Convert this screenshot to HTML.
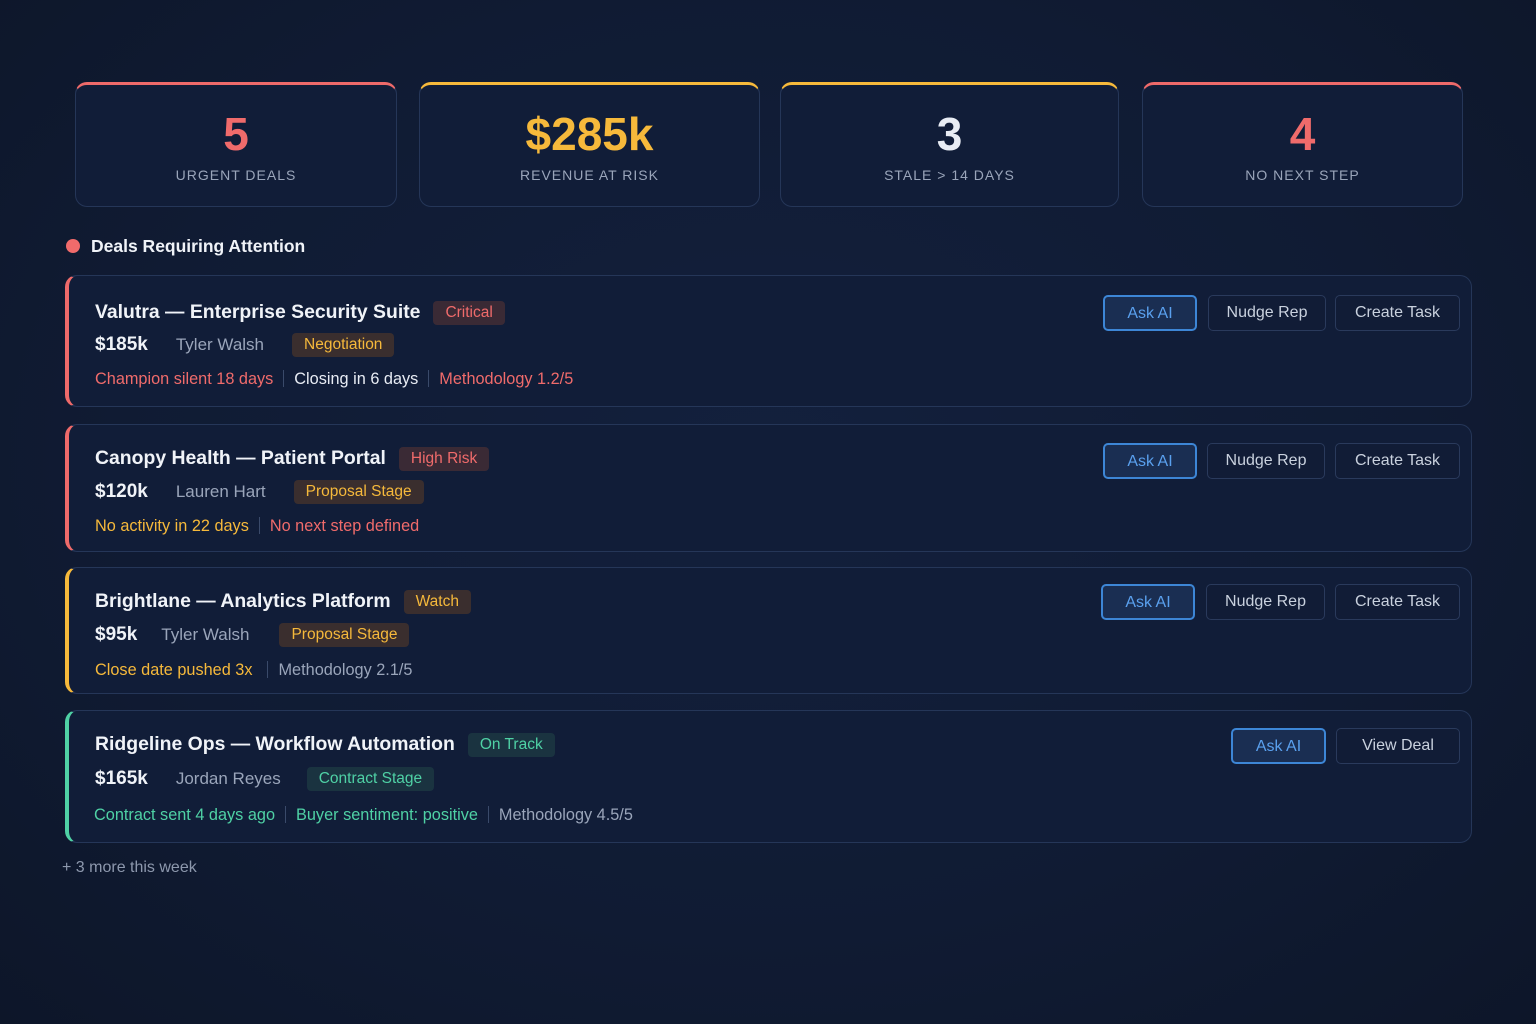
<!DOCTYPE html>
<html><head><meta charset="utf-8"><style>
*{box-sizing:border-box;margin:0;padding:0}
body{width:1536px;height:1024px;overflow:hidden;background:radial-gradient(ellipse at 50% 45%,#13203d 0%,#101b33 60%,#0d1629 100%);font-family:"Liberation Sans",sans-serif;color:#e8ecf4;position:relative}
.stat{position:absolute;top:82px;height:125px;border:1.5px solid #253658;border-radius:12px;background:#111d38;text-align:center}
.stat .n{position:absolute;left:0;right:0;top:23px;font-size:46px;font-weight:bold;line-height:52px}
.stat .l{position:absolute;left:0;right:0;top:82px;font-size:14px;letter-spacing:1px;color:#9aa5ba}
.red{color:#f06b6b}.amb{color:#f6b93b}.grn{color:#4fd1a5}.gry{color:#9aa5ba}.wht{color:#e8ecf4}
.card{position:absolute;left:65px;width:1407px;border:1.5px solid #253658;border-radius:12px;background:#111d38}
.card .t{position:absolute;left:26px;font-size:19.4px;font-weight:bold;color:#f0f3f8;white-space:nowrap}
.tag{display:inline-block;font-size:15.5px;font-weight:normal;padding:3px 12px;border-radius:4px;margin-left:13px;vertical-align:1px}
.r2{position:absolute;left:26px;font-size:17px;white-space:nowrap}
.r2 b{font-size:19px;color:#f0f3f8;margin-right:28px}
.r2 .p{color:#9aa5ba;margin-right:26px}
.r3{position:absolute;left:26px;font-size:16.3px;white-space:nowrap}
.sep{display:inline-block;width:1px;height:17px;background:#3a4a6a;margin:0 10px;vertical-align:-3px}
.btn{position:absolute;height:36px;border:1.5px solid #2a3a5c;border-radius:5px;font-size:16px;color:#c9d1de;text-align:center;line-height:33px;background:#111c36}
.btn.ai{border:2px solid #3d86d6;background:#1a2e52;color:#5aa0ee}
</style></head><body>
<div class="stat" style="left:75px;width:322px;border-top:3px solid #ee6a6a"><div class="n red">5</div><div class="l">URGENT DEALS</div></div>
<div class="stat" style="left:419px;width:341px;border-top:3px solid #f6b93b"><div class="n amb">$285k</div><div class="l">REVENUE AT RISK</div></div>
<div class="stat" style="left:780px;width:339px;border-top:3px solid #f6b93b"><div class="n wht">3</div><div class="l">STALE &gt; 14 DAYS</div></div>
<div class="stat" style="left:1142px;width:321px;border-top:3px solid #ee6a6a"><div class="n red">4</div><div class="l">NO NEXT STEP</div></div>

<div style="position:absolute;left:66px;top:239px;width:14px;height:14px;border-radius:50%;background:#f06b6b"></div>
<div style="position:absolute;left:91px;top:236px;font-size:17.5px;font-weight:bold;color:#f0f3f8">Deals Requiring Attention</div>

<div class="card" style="top:275px;height:132px;border-left:4px solid #ee6a6a">
<div class="t" style="top:25px">Valutra — Enterprise Security Suite<span class="tag red" style="background:#3a2a35">Critical</span></div>
<div class="r2" style="top:57px"><b>$185k</b><span class="p">Tyler Walsh</span><span class="tag amb" style="background:#3a2e2e;margin-left:2px">Negotiation</span></div>
<div class="r3" style="top:94px"><span class="red">Champion silent 18 days</span><span class="sep"></span><span class="wht">Closing in 6 days</span><span class="sep"></span><span class="red">Methodology 1.2/5</span></div>
</div>
<div class="btn ai" style="left:1103px;top:295px;width:94px">Ask AI</div>
<div class="btn" style="left:1208px;top:295px;width:118px">Nudge Rep</div>
<div class="btn" style="left:1335px;top:295px;width:125px">Create Task</div>

<div class="card" style="top:424px;height:128px;border-left:4px solid #ee6a6a">
<div class="t" style="top:22px">Canopy Health — Patient Portal<span class="tag red" style="background:#3a2a35">High Risk</span></div>
<div class="r2" style="top:55px"><b>$120k</b><span class="p">Lauren Hart</span><span class="tag amb" style="background:#3a2e2e;margin-left:2px">Proposal Stage</span></div>
<div class="r3" style="top:92px"><span class="amb">No activity in 22 days</span><span class="sep"></span><span class="red">No next step defined</span></div>
</div>
<div class="btn ai" style="left:1103px;top:443px;width:94px">Ask AI</div>
<div class="btn" style="left:1207px;top:443px;width:118px">Nudge Rep</div>
<div class="btn" style="left:1335px;top:443px;width:125px">Create Task</div>

<div class="card" style="top:567px;height:127px;border-left:4px solid #f6b93b">
<div class="t" style="top:22px">Brightlane — Analytics Platform<span class="tag amb" style="background:#3a2e2e">Watch</span></div>
<div class="r2" style="top:55px"><b style="margin-right:24px">$95k</b><span class="p">Tyler Walsh</span><span class="tag amb" style="background:#3a2e2e;margin-left:4px">Proposal Stage</span></div>
<div class="r3" style="top:93px"><span class="amb">Close date pushed 3x</span><span class="sep" style="margin:0 11px 0 14px"></span><span class="gry">Methodology 2.1/5</span></div>
</div>
<div class="btn ai" style="left:1101px;top:584px;width:94px">Ask AI</div>
<div class="btn" style="left:1206px;top:584px;width:119px">Nudge Rep</div>
<div class="btn" style="left:1335px;top:584px;width:125px">Create Task</div>

<div class="card" style="top:710px;height:133px;border-left:4px solid #4fd1a5">
<div class="t" style="top:22px">Ridgeline Ops — Workflow Automation<span class="tag grn" style="background:#1a3340">On Track</span></div>
<div class="r2" style="top:56px"><b>$165k</b><span class="p">Jordan Reyes</span><span class="tag grn" style="background:#1a3340;margin-left:0">Contract Stage</span></div>
<div class="r3" style="top:95px;left:25px"><span class="grn">Contract sent 4 days ago</span><span class="sep"></span><span class="grn">Buyer sentiment: positive</span><span class="sep"></span><span class="gry">Methodology 4.5/5</span></div>
</div>
<div class="btn ai" style="left:1231px;top:728px;width:95px">Ask AI</div>
<div class="btn" style="left:1336px;top:728px;width:124px">View Deal</div>

<div style="position:absolute;left:62px;top:859px;font-size:16px;color:#8d98ad">+ 3 more this week</div>
</body></html>
